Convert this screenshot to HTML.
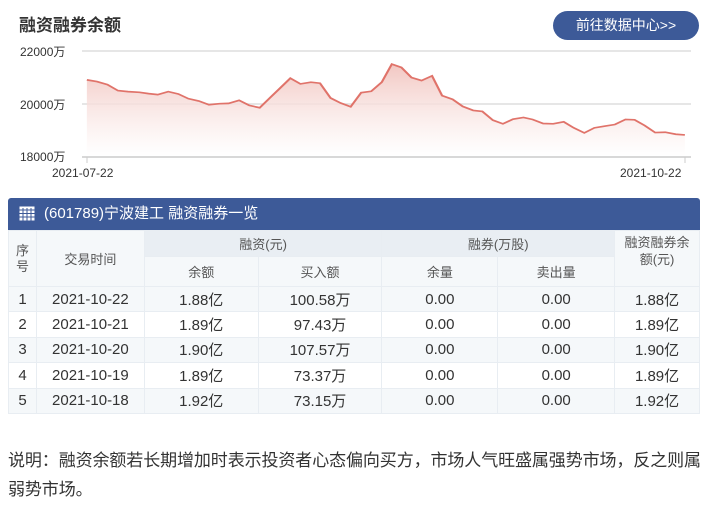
<!DOCTYPE html>
<html><head><meta charset="utf-8"><style>
*{margin:0;padding:0;box-sizing:border-box}
body{width:717px;height:515px;background:#fff;font-family:"Liberation Sans","Noto Sans CJK SC",sans-serif;color:#333;position:relative;overflow:hidden}
.t{position:absolute;left:19px;top:11px;font-size:17px;font-weight:bold;color:#333}
.btn{position:absolute;left:553px;top:11px;width:146px;height:29px;border-radius:15px;background:#3d5a98;color:#fff;font-size:14px;line-height:29px;text-align:center}
.yl{position:absolute;font-size:12px;color:#333}
.bar{position:absolute;left:8px;top:198px;width:692px;height:32px;background:#3d5a98;border-radius:3px 3px 0 0;color:#fff;font-size:15px;line-height:32px;padding-left:36px}
table{position:absolute;left:8px;top:230px;width:692px;border-collapse:collapse;font-size:15px;color:#333}
td{text-align:center;border:1px solid #e8edf2;height:25.4px}
.h td{background:#f5f8fa;color:#555;font-size:13px}
.h td.g{background:#e9eef3}
tr.a td{background:#f5f8fa}
.desc{position:absolute;left:8px;top:446px;width:717px;font-size:17px;line-height:29px;letter-spacing:-0.1px;color:#333;white-space:nowrap}
</style></head><body>
<div class="t">融资融券余额</div>
<div class="btn">前往数据中心&gt;&gt;</div>
<div class="yl" style="left:20px;top:43px">22000万</div>
<div class="yl" style="left:20px;top:96px">20000万</div>
<div class="yl" style="left:20px;top:148px">18000万</div>
<div class="yl" style="left:52px;top:166px">2021-07-22</div>
<div class="yl" style="left:620px;top:166px">2021-10-22</div>
<svg style="position:absolute;left:0;top:0" width="717" height="200">
<defs><linearGradient id="g" x1="0" y1="0" x2="0" y2="1"><stop offset="0" stop-color="#f2c7c2"/><stop offset="1" stop-color="#fff" stop-opacity="0.6"/></linearGradient></defs>
<line x1="82" y1="51" x2="691" y2="51" stroke="#ddd" stroke-width="1.5"/>
<line x1="82" y1="104" x2="691" y2="104" stroke="#ddd" stroke-width="1.5"/>
<g transform="scale(0.4572,0.3356)">
<path fill="url(#g)" d="M190,238 212,243 235,252 258,270 280,273 305,275 325,279 345,282 368,273 390,280 412,294 435,301 457,312 480,309 500,308 523,299 545,314 568,321 590,292 613,262 635,233 657,250 680,245 700,248 723,292 745,307 767,318 790,276 812,272 835,245 857,191 878,201 900,231 922,240 945,226 967,285 990,296 1012,317 1035,329 1055,332 1078,358 1100,369 1122,355 1145,350 1165,356 1188,368 1210,369 1233,363 1255,381 1278,396 1300,381 1322,376 1345,371 1368,356 1388,357 1410,374 1433,395 1455,394 1478,400 1498,402 L1498,466 190,466Z"/>
<path fill="none" stroke="#e0736a" stroke-width="5" d="M190,238 212,243 235,252 258,270 280,273 305,275 325,279 345,282 368,273 390,280 412,294 435,301 457,312 480,309 500,308 523,299 545,314 568,321 590,292 613,262 635,233 657,250 680,245 700,248 723,292 745,307 767,318 790,276 812,272 835,245 857,191 878,201 900,231 922,240 945,226 967,285 990,296 1012,317 1035,329 1055,332 1078,358 1100,369 1122,355 1145,350 1165,356 1188,368 1210,369 1233,363 1255,381 1278,396 1300,381 1322,376 1345,371 1368,356 1388,357 1410,374 1433,395 1455,394 1478,400 1498,402"/>
</g>
<line x1="82" y1="157" x2="691" y2="157" stroke="#ccc" stroke-width="1.5"/>
<line x1="87" y1="157" x2="87" y2="163" stroke="#ccc"/><line x1="685" y1="157" x2="685" y2="163" stroke="#ccc"/>
</svg>
<div class="bar">(601789)宁波建工 融资融券一览</div>
<svg style="position:absolute;left:19px;top:206px" width="16" height="15"><rect x="0.5" y="0.5" width="15" height="14" fill="#fff"/><g stroke="#3d5a98" stroke-width="1"><line x1="0" y1="4" x2="16" y2="4"/><line x1="0" y1="7.5" x2="16" y2="7.5"/><line x1="0" y1="11" x2="16" y2="11"/><line x1="4" y1="2" x2="4" y2="15"/><line x1="8" y1="2" x2="8" y2="15"/><line x1="12" y1="2" x2="12" y2="15"/></g></svg>
<table>
<colgroup><col style="width:28px"><col style="width:108px"><col style="width:114px"><col style="width:124px"><col style="width:116px"><col style="width:117px"><col style="width:85px"></colgroup>
<tr class="h" style="height:26px"><td rowspan="2" style="line-height:16px">序<br>号</td><td rowspan="2">交易时间</td><td colspan="2" class="g">融资(元)</td><td colspan="2" class="g">融券(万股)</td><td rowspan="2" style="line-height:17px;vertical-align:top;padding-top:3px">融资融券余<br>额(元)</td></tr>
<tr class="h" style="height:30px"><td>余额</td><td>买入额</td><td>余量</td><td>卖出量</td></tr>
<tr class="a"><td>1</td><td>2021-10-22</td><td>1.88亿</td><td>100.58万</td><td>0.00</td><td>0.00</td><td>1.88亿</td></tr>
<tr><td>2</td><td>2021-10-21</td><td>1.89亿</td><td>97.43万</td><td>0.00</td><td>0.00</td><td>1.89亿</td></tr>
<tr class="a"><td>3</td><td>2021-10-20</td><td>1.90亿</td><td>107.57万</td><td>0.00</td><td>0.00</td><td>1.90亿</td></tr>
<tr><td>4</td><td>2021-10-19</td><td>1.89亿</td><td>73.37万</td><td>0.00</td><td>0.00</td><td>1.89亿</td></tr>
<tr class="a"><td>5</td><td>2021-10-18</td><td>1.92亿</td><td>73.15万</td><td>0.00</td><td>0.00</td><td>1.92亿</td></tr>
</table>
<div class="desc">说明：融资余额若长期增加时表示投资者心态偏向买方，市场人气旺盛属强势市场，反之则属<br>弱势市场。</div>
</body></html>
